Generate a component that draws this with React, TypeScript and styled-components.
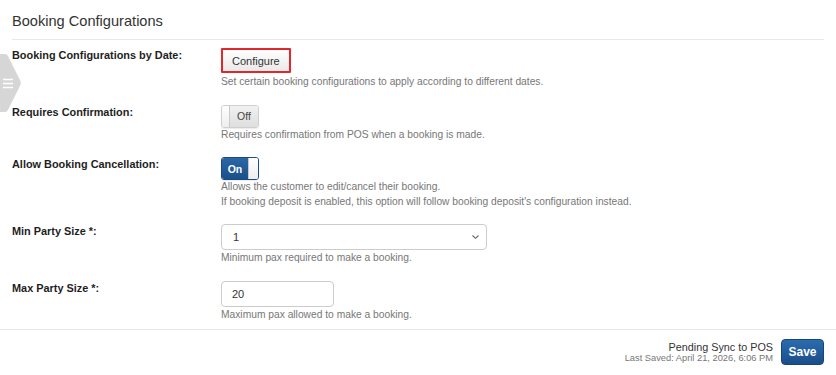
import React from "react";
import styled, { createGlobalStyle } from "styled-components";

const GlobalStyle = createGlobalStyle`
  html, body {
    margin: 0;
    padding: 0;
    background: #ffffff;
  }
  body {
    font-family: "Liberation Sans", Arial, Helvetica, sans-serif;
    color: #333333;
  }
  * {
    box-sizing: border-box;
  }
`;

const Page = styled.div`
  position: relative;
  width: 836px;
  height: 375px;
  display: flex;
  flex-direction: column;
  background: #ffffff;
  overflow: hidden;
`;

const Main = styled.main`
  flex: 1;
  padding: 0 12px;
`;

const Title = styled.h2`
  margin: 0;
  padding: 11px 0 8px;
  font-size: 14.6px;
  line-height: 20px;
  font-weight: 400;
  color: #333333;
  border-bottom: 1px solid #e8e8e8;
`;

const Form = styled.div`
  display: flex;
  flex-direction: column;
  gap: 15px;
  padding-top: 8px;
`;

const Row = styled.div`
  display: grid;
  grid-template-columns: 209px 1fr;
  align-items: start;
`;

const Label = styled.label`
  font-size: 10.9px;
  line-height: 15px;
  font-weight: 700;
  color: #1e1e1e;
`;

const Field = styled.div`
  display: flex;
  flex-direction: column;
  align-items: flex-start;
`;

const Help = styled.div<{ $gap?: number }>`
  margin-top: ${(p) => p.$gap ?? 0}px;
  font-size: 10.25px;
  line-height: 14.5px;
  color: #777777;
`;

const ConfigureButton = styled.button`
  height: 25px;
  padding: 0 9px;
  display: inline-flex;
  align-items: center;
  font-family: inherit;
  font-size: 11px;
  color: #333333;
  background: linear-gradient(#ffffff, #e9e9e9);
  border: 2px solid #e3262a;
  border-radius: 1px;
  cursor: pointer;
`;

const Toggle = styled.div<{ $on: boolean }>`
  width: 38px;
  height: 23px;
  display: flex;
  flex-direction: ${(p) => (p.$on ? "row-reverse" : "row")};
  border: 1px solid ${(p) => (p.$on ? "#1a4b83" : "#cfcfcf")};
  border-radius: 3px;
  overflow: hidden;
  box-shadow: 0 1px 1px rgba(0, 0, 0, 0.08);
`;

const Knob = styled.span<{ $on: boolean }>`
  width: ${(p) => (p.$on ? 10 : 8)}px;
  background: linear-gradient(#ffffff, #ededed);
  border-${(p) => (p.$on ? "left" : "right")}: 1px solid #c9c9c9;
`;

const ToggleText = styled.span<{ $on: boolean }>`
  flex: 1;
  display: flex;
  align-items: center;
  justify-content: center;
  font-size: ${(p) => (p.$on ? 10.5 : 10.5)}px;
  font-weight: ${(p) => (p.$on ? 700 : 400)};
  color: ${(p) => (p.$on ? "#ffffff" : "#444444")};
  background: ${(p) =>
    p.$on
      ? "linear-gradient(#2a68a8, #1c5089)"
      : "linear-gradient(#f1f1f1, #dedede)"};
`;

const SelectBox = styled.div`
  width: 266px;
  height: 26px;
  display: flex;
  align-items: center;
  justify-content: space-between;
  padding: 0 6px 0 11px;
  border: 1px solid #cccccc;
  border-radius: 4px;
  background: #ffffff;
  font-size: 11px;
  color: #333333;
`;

const TextInput = styled.input`
  width: 113px;
  height: 26px;
  padding: 0 10px;
  border: 1px solid #cccccc;
  border-radius: 4px;
  font-family: inherit;
  font-size: 11px;
  color: #333333;
  background: #ffffff;
  outline: none;
`;

const Footer = styled.footer`
  display: flex;
  justify-content: flex-end;
  align-items: center;
  gap: 8px;
  padding: 9px 12px 10px;
  border-top: 1px solid #e8e8e8;
`;

const Status = styled.div`
  text-align: right;
`;

const Pending = styled.div`
  font-size: 10.8px;
  line-height: 12px;
  color: #333333;
`;

const LastSaved = styled.div`
  font-size: 9.3px;
  line-height: 11px;
  color: #777777;
`;

const SaveButton = styled.button`
  width: 43px;
  height: 26px;
  padding: 0;
  font-family: inherit;
  font-size: 12px;
  font-weight: 700;
  color: #ffffff;
  background: linear-gradient(#2b6cad, #1a4e89);
  border: 1px solid #174675;
  border-radius: 4px;
  cursor: pointer;
`;

const SideTab = styled.div`
  position: absolute;
  left: 0;
  top: 54px;
  width: 22px;
  height: 58px;
`;

const Chevron = () => (
  <svg width="9" height="6" viewBox="0 0 9 6">
    <path d="M1.5 1.5 L4.5 4.3 L7.5 1.5" fill="none" stroke="#666" strokeWidth="1.1" />
  </svg>
);

const Toggler = ({ on }: { on: boolean }) => (
  <Toggle $on={on}>
    <Knob $on={on} />
    <ToggleText $on={on}>{on ? "On" : "Off"}</ToggleText>
  </Toggle>
);

export default function App() {
  return (
    <>
      <GlobalStyle />
      <Page>
        <Main>
          <Title>Booking Configurations</Title>
          <Form>
            <Row>
              <Label>Booking Configurations by Date:</Label>
              <Field>
                <ConfigureButton>Configure</ConfigureButton>
                <Help $gap={2}>
                  Set certain booking configurations to apply according to different dates.
                </Help>
              </Field>
            </Row>
            <Row>
              <Label>Requires Confirmation:</Label>
              <Field>
                <Toggler on={false} />
                <Help>Requires confirmation from POS when a booking is made.</Help>
              </Field>
            </Row>
            <Row>
              <Label>Allow Booking Cancellation:</Label>
              <Field>
                <Toggler on={true} />
                <Help>
                  Allows the customer to edit/cancel their booking.
                  <br />
                  If booking deposit is enabled, this option will follow booking deposit's
                  configuration instead.
                </Help>
              </Field>
            </Row>
            <Row>
              <Label>Min Party Size *:</Label>
              <Field>
                <SelectBox role="combobox">
                  <span>1</span>
                  <Chevron />
                </SelectBox>
                <Help $gap={1}>Minimum pax required to make a booking.</Help>
              </Field>
            </Row>
            <Row>
              <Label>Max Party Size *:</Label>
              <Field>
                <TextInput defaultValue="20" />
                <Help $gap={1}>Maximum pax allowed to make a booking.</Help>
              </Field>
            </Row>
          </Form>
        </Main>
        <Footer>
          <Status>
            <Pending>Pending Sync to POS</Pending>
            <LastSaved>Last Saved: April 21, 2026, 6:06 PM</LastSaved>
          </Status>
          <SaveButton>Save</SaveButton>
        </Footer>
        <SideTab>
          <svg width="22" height="58" viewBox="0 0 22 58">
            <path
              d="M0 0 H5 Q7 0 8 2 L20.4 27 Q21.4 29 20.4 31 L8 56 Q7 58 5 58 H0 Z"
              fill="#d6d6d6"
            />
            <path
              d="M3 25.5 H13 M3 29.5 H13 M3 33.5 H13"
              stroke="#ffffff"
              strokeWidth="1.4"
            />
          </svg>
        </SideTab>
      </Page>
    </>
  );
}
